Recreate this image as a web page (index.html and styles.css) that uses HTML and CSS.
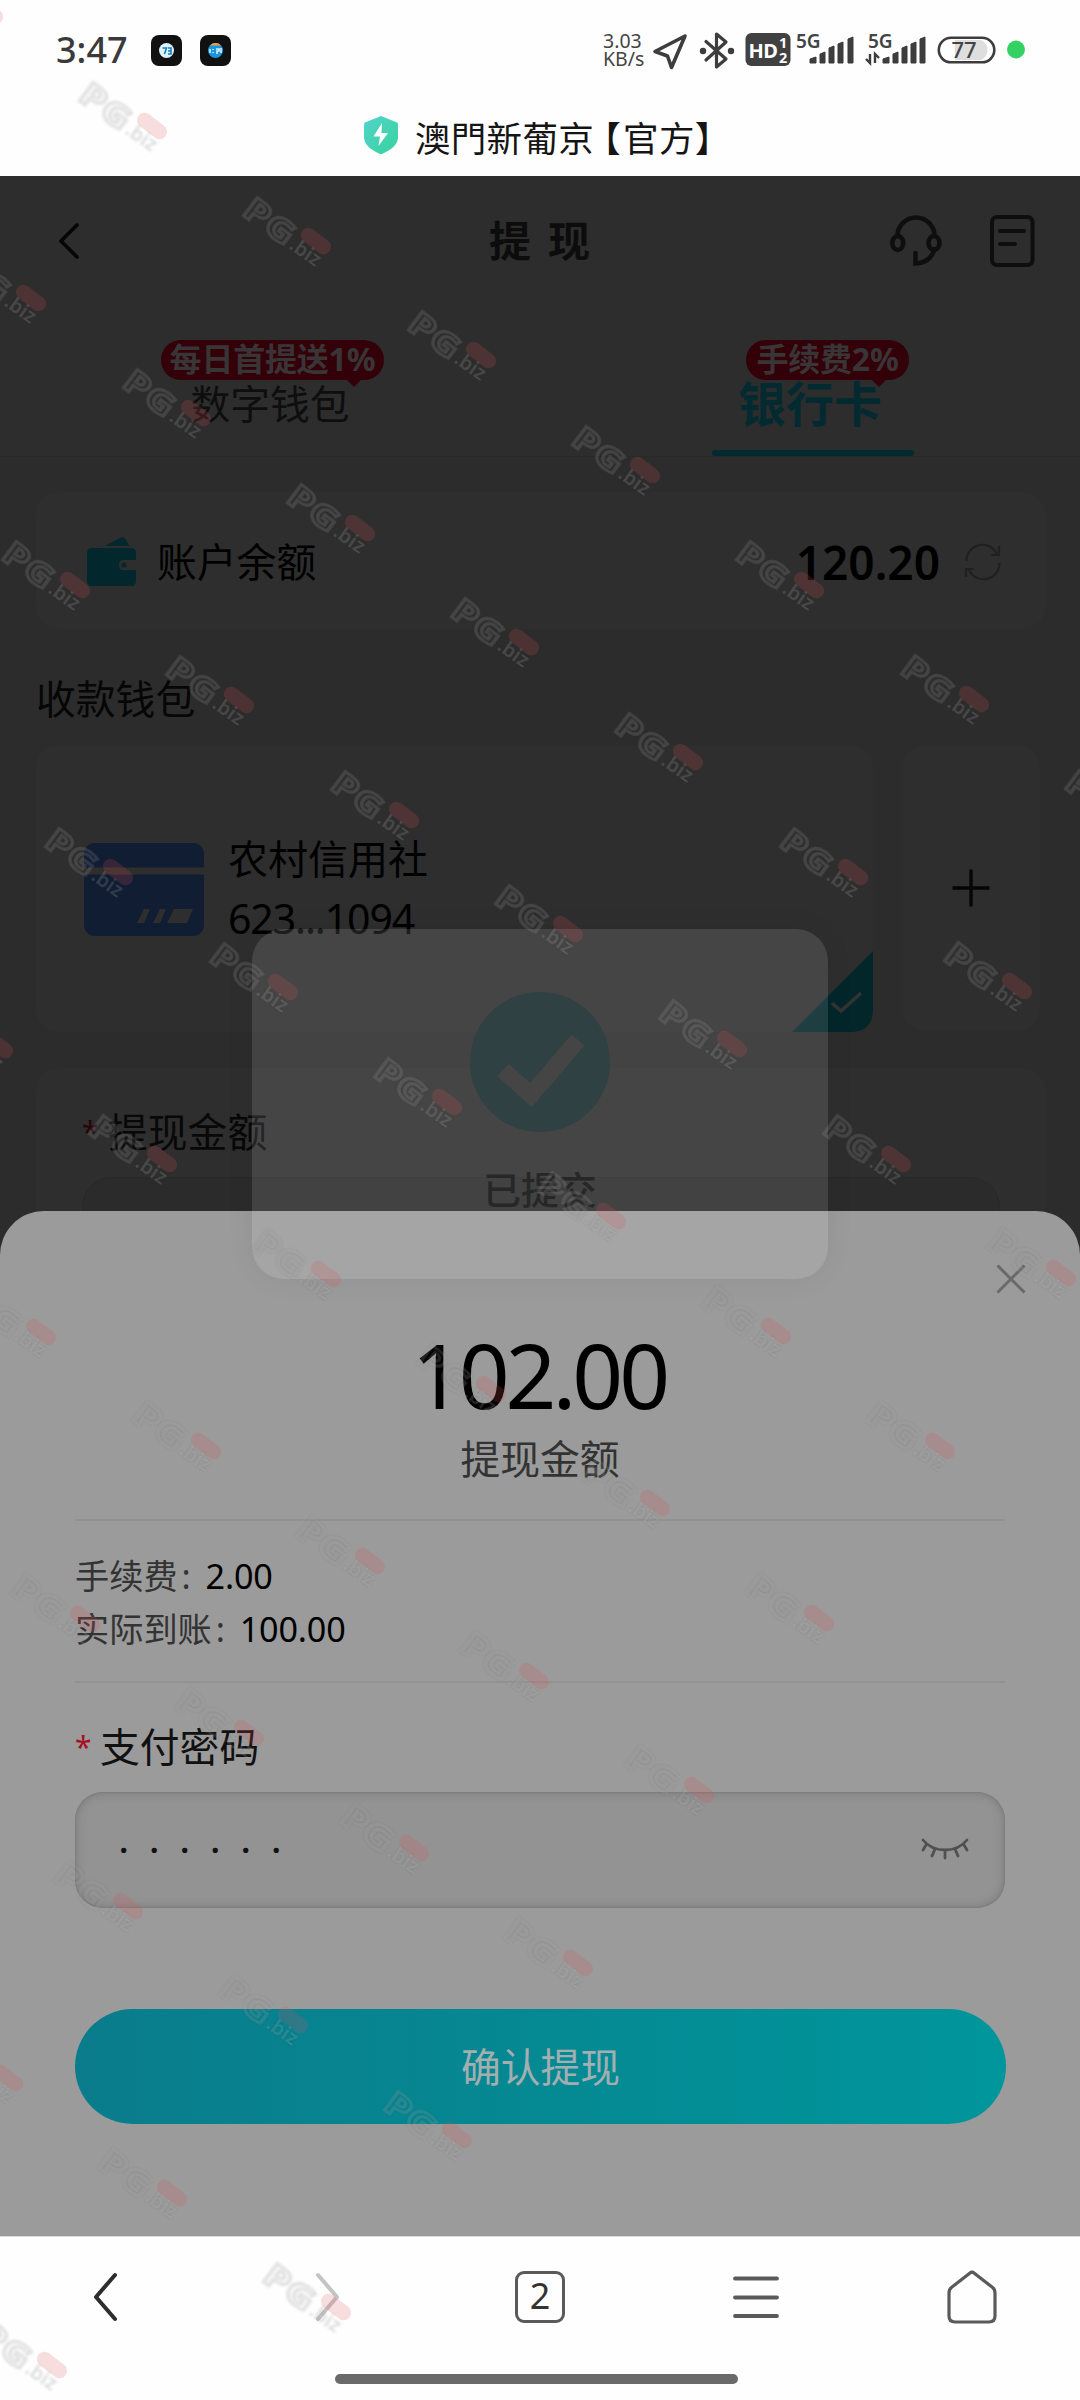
FILE: index.html
```html
<!DOCTYPE html>
<html lang="zh-CN">
<head>
<meta charset="utf-8">
<title>提现</title>
<link rel="stylesheet" href="styles.css">
</head>
<body>
<div class="screen">
  <header class="status">
    <div class="status-left">
      <span class="time">3:47</span>
      <svg class="app" viewBox="0 0 31 31"><rect width="31" height="31" rx="8" fill="#111"/><circle cx="15.500" cy="15.500" r="7.500" fill="#dff2fb"/><path d="M11.500 13h4l-2 6M17 13h3v6h-3M17 16h3" stroke="#1483b8" stroke-width="1.600" fill="none"/></svg>
      <svg class="app" viewBox="0 0 31 31"><rect width="31" height="31" rx="8" fill="#111"/><circle cx="15.500" cy="15.500" r="7.500" fill="#1b95dd"/><path d="M10 10.500a7.500 7.500 0 0 1 11 0z" fill="#e9a23f"/><path d="M10 14v4M13 14v1m0 2v1M16 14h3v2h-2v3M21 13v5" stroke="#d8f0ff" stroke-width="1.600" fill="none"/></svg>
    </div>
    <div class="status-right">
      <div class="speed"><span>3.03</span><span>KB/s</span></div>
      <svg width="50" height="60" viewBox="649 20 50 60"><path d="M685 36 655 51.500 667.500 56 671.500 67.500z" class="ln" stroke-width="3.600"/></svg>
      <svg width="42" height="60" viewBox="699 20 42 60"><path d="M706 41.500 726 59 716.500 67V34L726 42 706 60" class="ln" stroke-width="3.200"/><circle cx="703" cy="51" r="3.200" fill="#3d3d3d"/><circle cx="731" cy="51" r="3.200" fill="#3d3d3d"/></svg>
      <svg width="53" height="60" viewBox="741 20 53 60"><rect x="745.500" y="33" width="45" height="33" rx="6" fill="#414141"/><text x="748.500" y="58" class="hd">HD</text><text x="779" y="48" class="hd-s">1</text><text x="779" y="62.500" class="hd-s">2</text></svg>
      <svg width="66" height="60" viewBox="794 20 66 60"><text x="796" y="47.500" class="g5">5G</text><path d="M810 63v-4l6-2v6zM820 63v-9l5-2v11zM829 63V48l5-2v17zM838 63V44l5-2v21zM848 63V39l5-2v26z" class="bars"/></svg>
      <svg width="72" height="60" viewBox="860 20 72 60"><text x="868" y="47.500" class="g5">5G</text><path d="M866 59l4 4V54M875 63V54l4 4" stroke="#3d3d3d" stroke-width="2.400" fill="none"/><path d="M883 63v-4l6-2v6zM893 63v-9l5-2v11zM902 63V48l5-2v17zM911 63V44l5-2v21zM920 63V39l5-2v26z" class="bars"/></svg>
      <svg width="66" height="60" viewBox="932 20 66 60"><path d="M955 40h26a11 11 0 0 1 0 20h-26z" fill="#dedede"/><rect x="938.800" y="37.800" width="55.500" height="24.500" rx="12.200" class="ln" stroke-width="2.600"/><text x="964" y="57.500" text-anchor="middle" class="batt">77</text></svg>
      <svg width="34" height="60" viewBox="998 20 34 60"><circle cx="1016" cy="49.500" r="9" fill="#34d163"/></svg>
    </div>
  </header>
  <div class="titlebar">
    <svg width="34" height="38" viewBox="0 0 34 38"><defs><linearGradient id="sh" x2="1" y2="1"><stop offset="0" stop-color="#52d3cd"/><stop offset="1" stop-color="#37d39b"/></linearGradient></defs><path d="M17 0 33 6.500Q34 7 34 8.500V21c0 8-7 13-17 17.500C7 34 0 29 0 21V8.500Q0 7 1 6.500z" fill="url(#sh)"/><path d="M18 7 9.500 20.500H16L14.500 30 24 17h-6.500z" fill="#fff"/></svg>
    <h1>澳門新葡京<span class="half br">【</span>官方<span class="half">】</span></h1>
  </div>

  <main class="page">
    <div class="page-head">
      <svg width="20" height="36" viewBox="0 0 20 36"><path d="M18 2 2 18 18 34" fill="none" stroke="#050505" stroke-width="3.600" stroke-linecap="round"/></svg>
      <h2>提现</h2>
      <div class="head-actions">
        <svg width="52" height="52" viewBox="0 0 52 52" fill="none" stroke="#0e0e0e" stroke-width="4.600"><path d="M7.500 21a18.500 18.500 0 0 1 37 0M44.500 34C42 43 36 48 25.500 48.500V38" stroke-linecap="round"/><ellipse cx="7.800" cy="28" rx="5.500" ry="7"/><ellipse cx="44" cy="28" rx="5.500" ry="7"/></svg>
        <svg width="46" height="54" viewBox="0 0 46 54" fill="none" stroke="#0e0e0e" stroke-width="4"><rect x="3" y="3" width="40.500" height="48" rx="5"/><path d="M11 17h24M11 30h15" stroke-linecap="round"/></svg>
      </div>
    </div>
    <nav class="tabs">
      <div class="tab"><span class="label">数字钱包</span><span class="badge badge-l">每日首提送1%</span></div>
      <div class="tab active"><span class="label">银行卡</span><span class="badge badge-r">手续费2%</span></div>
    </nav>
    <section class="balance card">
      <svg width="50" height="49" viewBox="0 0 50 49"><path d="M18 9 33 1q3-2 5.500 1l4 7zM5 11h39q5 0 5 5v7H36q-4 0-4 5t4 5h13v11q0 5-5 5H5q-5 0-5-5V16q0-5 5-5z" fill="#02282d"/><circle cx="37" cy="28" r="2.600" fill="#02282d"/></svg>
      <span class="name">账户余额</span>
      <b class="sum">120.20</b>
      <svg width="38" height="38" viewBox="0 0 38 38" fill="none" stroke="#202020" stroke-width="2.200"><path d="M2.500 18A16 16 0 0 1 33 11M35.500 20A16 16 0 0 1 5 27M35 3v9h-8M2 34v-8h8"/></svg>
    </section>
    <h3>收款钱包</h3>
    <div class="wallets">
      <div class="wallet card">
        <svg width="120" height="93" viewBox="0 0 120 93"><rect width="120" height="93" rx="11" fill="#101d33"/><path d="M0 24.500h120v7H0z" fill="#2e2e2e"/><path d="M60 66h6l-6 14h-7zM76 66h6l-6 14h-7zM90 66h19l-6 14H83z" fill="#2e2e2e"/></svg>
        <div class="bank"><span>农村信用社</span><span class="num">623...1094</span></div>
        <svg class="picked" width="81" height="81" viewBox="0 0 81 81"><path d="M81 0v58q0 23-23 23H0z" fill="#02262a"/><path d="M40 52l9 8 20-18" fill="none" stroke="#333" stroke-width="3.600"/></svg>
      </div>
      <div class="add card"><svg width="40" height="40" viewBox="0 0 40 40"><path d="M20 1.500v37M1.500 20h37" stroke="#060606" stroke-width="3.400"/></svg></div>
    </div>
    <section class="form card">
      <label><i>*</i>提现金额</label>
      <div class="dim-input"></div>
    </section>

    <section class="sheet">
      <svg class="close" width="30" height="30" viewBox="0 0 30 30"><path d="M1.500 1.500l27 27M28.500 1.500l-27 27" stroke="#6a6a6a" stroke-width="3"/></svg>
      <div class="amount">102.00</div>
      <div class="caption">提现金额</div>
      <div class="fees">
        <p>手续费<em>:</em><span>2.00</span></p>
        <p>实际到账<em>:</em><span>100.00</span></p>
      </div>
      <label class="pw-label"><i>*</i>支付密码</label>
      <div class="pw">
        <span>······</span>
        <svg width="48" height="24" viewBox="0 0 48 24" fill="none" stroke="#505050" stroke-width="2.800" stroke-linecap="round"><path d="M2 2Q10 12 24 12T46 2M5 7 2 12M14 11l-3 7M24 12v8M34 11l3 7M43 7l3 5"/></svg>
      </div>
      <button class="confirm">确认提现</button>
    </section>

    <div class="toast">
      <svg width="142" height="140" viewBox="-1 0 142 140"><circle cx="70" cy="70" r="70" fill="#2f4142"/><path d="M33 78l28 25 47-55" fill="none" stroke="#454545" stroke-width="17"/></svg>
      <span>已提交</span>
    </div>
  </main>

  <footer class="navbar">
    <div class="nav-icons">
      <svg class="chev-back" width="26" height="50" viewBox="0 0 26 50"><path d="M23 3 4 25 23 47" fill="none" stroke="#2d2d2d" stroke-width="4" stroke-linecap="round" stroke-linejoin="round"/></svg>
      <svg class="chev-fwd" width="26" height="50" viewBox="0 0 26 50"><path d="M5 3 24 25 5 47" fill="none" stroke="#c4c4c4" stroke-width="4" stroke-linecap="round" stroke-linejoin="round"/></svg>
      <span class="count">2</span>
      <svg width="46" height="46" viewBox="0 0 46 46"><path d="M2 4.500h42M2 23.500h42M2 42h42" stroke="#5a5a5a" stroke-width="3.800" stroke-linecap="round"/></svg>
      <svg width="50" height="54" viewBox="0 0 50 54"><path d="M23 3q2-2 4 0l18 14q3 2 3 6v23q0 6-6 6H8q-6 0-6-6V23q0-4 3-6z" fill="none" stroke="#5a5a5a" stroke-width="3.200"/></svg>
    </div>
    <div class="home-bar"></div>
  </footer>

  <svg class="marks" width="1080" height="2400" viewBox="0 0 1080 2400" aria-hidden="true">
    <defs>
      <g id="m">
        <text class="m-pg" transform="translate(0 21) rotate(37) scale(1.250 1)">PG</text>
        <rect x="-17" y="-7.500" width="34" height="15" rx="7.500" transform="translate(75 48) rotate(37)" fill="#e0525c" fill-opacity=".19"/>
        <text class="m-biz" transform="translate(47 55) rotate(35)">.biz</text>
      </g>
    </defs>
    <use href="#m" x="-87" y="-37"/><use href="#m" x="77" y="78"/><use href="#m" x="241" y="193"/><use href="#m" x="406" y="307"/><use href="#m" x="570" y="422"/><use href="#m" x="734" y="537"/><use href="#m" x="899" y="651"/><use href="#m" x="1063" y="766"/>
    <use href="#m" x="-44" y="250"/><use href="#m" x="121" y="365"/><use href="#m" x="285" y="480"/><use href="#m" x="449" y="594"/><use href="#m" x="613" y="709"/><use href="#m" x="778" y="824"/><use href="#m" x="942" y="938"/>
    <use href="#m" x="0" y="537"/><use href="#m" x="164" y="652"/><use href="#m" x="329" y="767"/><use href="#m" x="493" y="881"/><use href="#m" x="657" y="996"/><use href="#m" x="821" y="1111"/><use href="#m" x="986" y="1225"/>
    <use href="#m" x="43" y="824"/><use href="#m" x="208" y="939"/><use href="#m" x="372" y="1054"/><use href="#m" x="536" y="1168"/><use href="#m" x="701" y="1283"/><use href="#m" x="865" y="1398"/>
    <use href="#m" x="-77" y="997"/><use href="#m" x="87" y="1111"/><use href="#m" x="251" y="1226"/><use href="#m" x="416" y="1341"/><use href="#m" x="580" y="1455"/><use href="#m" x="744" y="1570"/>
    <use href="#m" x="-34" y="1284"/><use href="#m" x="131" y="1398"/><use href="#m" x="295" y="1513"/><use href="#m" x="459" y="1628"/><use href="#m" x="624" y="1742"/>
    <use href="#m" x="10" y="1571"/><use href="#m" x="174" y="1685"/><use href="#m" x="339" y="1800"/><use href="#m" x="503" y="1915"/>
    <use href="#m" x="53" y="1858"/><use href="#m" x="218" y="1972"/><use href="#m" x="382" y="2087"/>
    <use href="#m" x="-67" y="2030"/><use href="#m" x="97" y="2145"/><use href="#m" x="261" y="2259"/><use href="#m" x="-23" y="2317"/>
  </svg>
</div>
</body>
</html>
```
FILE: styles.css
```css
* { box-sizing: border-box; }
body, h1, h2, h3, p { margin: 0; font-weight: 400; }
body { width: 1080px; background: #fff; font-family: "Noto Sans", "Noto Sans CJK SC", sans-serif; font-size: 39px; color: #000; }
svg { display: block; flex: none; }
i { font-style: normal; }

.screen { position: relative; width: 1080px; height: 2400px; overflow: hidden; display: flex; flex-direction: column; background: #fefefe; }

.status { height: 100px; display: flex; justify-content: space-between; padding: 20px 48px 0 56px; }
.status-left { display: flex; align-items: center; height: 60px; gap: 18px; }
.time { font-size: 36px; font-weight: 500; color: #3a3a3a; line-height: 60px; width: 77px; }
.app { width: 31px; height: 31px; }
.status-right { display: flex; height: 60px; }
.speed { width: 46px; padding-top: 12px; display: flex; flex-direction: column; font-size: 19.500px; line-height: 17.500px; color: #444; }
.ln { fill: none; stroke: #3d3d3d; stroke-linejoin: round; stroke-linecap: round; }
.bars { fill: #3d3d3d; stroke: #3d3d3d; stroke-linejoin: round; }
.hd { font-size: 20px; font-weight: 700; fill: #fff; letter-spacing: -.5px; }
.hd-s { font-size: 14.500px; font-weight: 700; fill: #fff; }
.g5 { font-size: 19px; font-weight: 600; fill: #444; }
.batt { font-size: 22px; font-weight: 500; fill: #444; }

.titlebar { height: 76px; display: flex; align-items: flex-start; justify-content: flex-start; padding: 16px 0 0 364px; gap: 17px; }
.titlebar h1 { font-size: 35.500px; line-height: 42px; font-family: "Noto Sans CJK TC", sans-serif; color: #151515; white-space: nowrap; letter-spacing: .3px; }
.half { font-feature-settings: "halt"; }
.br { margin: 0 2px 0 9px; }

.page { position: relative; height: 2060px; background: #2c2c2c; overflow: hidden; display: flex; flex-direction: column; }
.page-head { height: 124px; background: #2d2d2d; display: grid; grid-template-columns: 1fr auto 1fr; align-items: center; padding: 6px 45px 0 59px; }
.page-head h2 { font-size: 42px; font-weight: 700; letter-spacing: 17px; margin-left: 2px; color: #0c0c0c; line-height: 60px; }
.head-actions { display: flex; justify-content: flex-end; align-items: center; gap: 47px; }

.tabs { height: 157px; display: grid; grid-template-columns: 1fr 1fr; background: #2d2d2d; border-bottom: 1px solid #292929; }
.tab { position: relative; display: flex; justify-content: center; padding-top: 74px; }
.label { font-size: 39.800px; line-height: 60px; height: 60px; color: #0e0e0e; }
.active .label { font-size: 48px; font-weight: 700; color: #022a30; }
.active::after { content: ""; position: absolute; left: 172px; bottom: 0; width: 202px; height: 6px; border-radius: 3px; background: #022a30; }
.badge { position: absolute; top: 40px; height: 40px; border-radius: 20px; background: #33000a; color: #393536; font-size: 32px; font-weight: 700; line-height: 38px; text-align: center; white-space: nowrap; letter-spacing: -.2px; }
.badge::after { content: ""; position: absolute; right: 22px; top: 39px; border: 8px solid transparent; border-top-color: #33000a; border-bottom: 0; }
.badge-l { left: 161px; width: 223px; }
.badge-r { left: 206px; width: 163px; }

.card { background: #2e2e2e; border-radius: 22px; }
.balance { margin: 35px 35px 0 36px; height: 137px; display: flex; align-items: center; padding: 2px 43px 0 51px; }
.name { margin-left: 20px; line-height: 60px; font-size: 39.800px; }
.sum { margin-left: auto; margin-right: 24px; font-size: 46px; font-weight: 600; line-height: 60px; }
.page h3 { margin: 38px 0 0 36px; font-size: 39.800px; line-height: 64px; height: 64px; color: #060606; }
.wallets { display: flex; gap: 29px; margin: 14px 0 0 36px; }
.wallet { position: relative; width: 837px; height: 287px; display: flex; padding: 98px 0 0 48px; gap: 24px; }
.bank { display: flex; flex-direction: column; font-size: 40px; line-height: 59px; margin-top: -14px; }
.num { font-size: 41px; letter-spacing: -1.100px; line-height: 61px; }
.picked { position: absolute; right: 0; bottom: 0; }
.add { width: 138px; height: 286px; display: flex; align-items: center; justify-content: center; }
.form { margin: 36px 35px 0 36px; height: 300px; padding: 34px 45px 0 46px; }
label { display: flex; line-height: 60px; font-size: 39.800px; color: #080808; }
label i { width: 26px; font-size: 30px; color: #280509; }
.dim-input { margin-top: 15px; height: 116px; border-radius: 30px; background: #2b2b2b; border: 1px solid #282828; }

.sheet { position: absolute; left: 0; right: 0; top: 1035px; bottom: 0; border-radius: 44px 44px 0 0; background: #9b9b9b; padding: 110px 75px 0; }
.close { position: absolute; left: 996px; top: 53px; }
.amount { text-align: center; font-size: 89px; line-height: 108px; letter-spacing: -4px; margin-right: 2px; }
.caption { text-align: center; color: #333; font-size: 39.800px; line-height: 60px; height: 90px; }
.fees { border: solid #929292; border-width: 2px 0; height: 164px; padding-top: 28px; font-size: 34.200px; line-height: 53px; color: #333; }
.fees p { display: flex; }
.fees em { font-style: normal; width: 28px; padding-left: 4px; }
.fees span { color: #000; letter-spacing: -.2px; }
.pw-label { margin-top: 34px; color: #111; }
.pw-label i { width: 25px; color: #a80f22; }
.pw { margin-top: 15px; height: 116px; border-radius: 28px; background: #939393; box-shadow: inset 0 0 12px rgba(0,0,0,.18), inset 0 0 2px rgba(0,0,0,.2); display: flex; align-items: center; justify-content: space-between; padding: 0 36px 0 44px; }
.pw span { font-size: 34px; font-weight: 600; letter-spacing: 21.100px; color: #111; }
.confirm { display: block; width: 931px; height: 115px; margin-top: 101px; border: 0; border-radius: 58px; background: linear-gradient(90deg, #0a7c8b, #00969b); color: #a3aeb0; font: 39.800px/111px "Noto Sans CJK SC", sans-serif; padding: 0 0 4px; }

.toast { position: absolute; left: 252px; top: 753px; width: 576px; height: 350px; border-radius: 32px; display: flex; flex-direction: column; align-items: center; padding-top: 63px; background: rgba(237,237,237,.12); box-shadow: 0 0 30px rgba(0,0,0,.06); }
.toast span { margin-top: 27px; font-size: 38px; font-weight: 500; line-height: 60px; color: #272727; }

.navbar { height: 164px; display: flex; flex-direction: column; align-items: center; border-top: 1px solid #ddd; }
.nav-icons { width: 1080px; height: 120px; display: grid; grid-template-columns: repeat(5, 1fr); place-items: center; }
.chev-back { margin-right: 6px; }
.chev-fwd { margin-left: 4px; }
.count { width: 50px; height: 52px; border: 3.500px solid #5a5a5a; border-radius: 9px; font-size: 36px; line-height: 44px; text-align: center; color: #333; }
.home-bar { margin: 17px 8px 0 0; width: 403px; height: 10px; border-radius: 5px; background: #6a6a6a; }

.marks { position: absolute; left: 0; top: 0; pointer-events: none; }
.m-pg { font: 700 32px "Noto Sans", sans-serif; letter-spacing: 1px; fill: none; stroke: #fff; stroke-opacity: .13; stroke-width: 3px; filter: drop-shadow(0 0 1px #000); }
.m-biz { font: 600 20px "Noto Sans", sans-serif; fill: #fff; fill-opacity: .15; filter: drop-shadow(0 0 1px #000); }
```
